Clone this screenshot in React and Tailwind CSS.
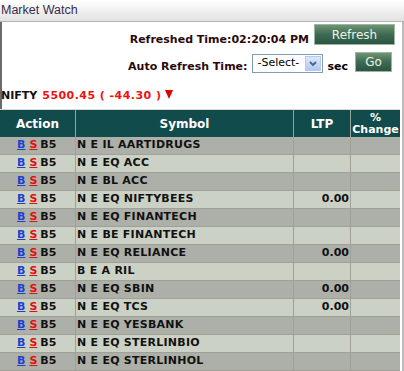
import React from 'react';

const rows = [
  { sym: 'N E IL AARTIDRUGS', ltp: '' },
  { sym: 'N E EQ ACC', ltp: '' },
  { sym: 'N E BL ACC', ltp: '' },
  { sym: 'N E EQ NIFTYBEES', ltp: '0.00' },
  { sym: 'N E EQ FINANTECH', ltp: '' },
  { sym: 'N E BE FINANTECH', ltp: '' },
  { sym: 'N E EQ RELIANCE', ltp: '0.00' },
  { sym: 'B E A RIL', ltp: '' },
  { sym: 'N E EQ SBIN', ltp: '0.00' },
  { sym: 'N E EQ TCS', ltp: '0.00' },
  { sym: 'N E EQ YESBANK', ltp: '' },
  { sym: 'N E EQ STERLINBIO', ltp: '' },
  { sym: 'N E EQ STERLINHOL', ltp: '' },
];

function GreenButton({ children, className }) {
  return (
    <button
      className={`bg-gradient-to-b from-[#6e9472] via-[#3d6a55] to-[#2a5543] border border-[#9fb59f] text-[#eef3e6] text-[12px] leading-none ${className}`}
    >
      {children}
    </button>
  );
}

export default function App() {
  return (
    <div className="w-[404px] h-[371px] bg-white overflow-hidden font-['DejaVu_Sans',Verdana,sans-serif]">
      {/* title bar */}
      <div className="h-[22px] border-b border-[#b5b5b5] bg-gradient-to-b from-white to-[#e2e2e2] flex items-center px-[1px]">
        <span className="text-[12.5px] text-[#3b2b4b] font-['Liberation_Sans',Arial,sans-serif]">Market Watch</span>
      </div>

      <div className="border-l-2 border-l-[#6b6b6b] border-r-2 border-r-[#bdbdbd] bg-white h-[349px] flex flex-col">
        {/* refreshed */}
        <div className="flex items-start justify-end pr-[7px] pt-[2px] h-[24px]">
          <span className="text-[11px] leading-[13px] font-bold text-[#2a0a0a] mr-[5px] mt-[9px]">Refreshed Time:02:20:04 PM</span>
          <GreenButton className="w-[81px] h-[21px]">Refresh</GreenButton>
        </div>
        {/* auto refresh */}
        <div className="flex items-start justify-end pr-[10px] pt-[6px] h-[50px]">
          <span className="text-[11px] leading-[13px] font-bold text-[#2a0a0a] mr-[5px] mt-[8px]">Auto Refresh Time:</span>
          <div className="w-[71px] h-[19px] mt-[2px] border border-[#7f9db9] bg-white flex items-center">
            <span className="flex-1 text-[11px] text-[#000] pl-[4px]">-Select-</span>
            <span className="w-[16px] h-[15px] mr-[1px] bg-gradient-to-b from-[#dde7fb] to-[#b5c8f1] border border-[#b7c9ef] flex items-center justify-center">
              <svg width="8" height="6" viewBox="0 0 8 6">
                <path d="M1 1 L4 4 L7 1" stroke="#4d6185" strokeWidth="1.8" fill="none" />
              </svg>
            </span>
          </div>
          <span className="text-[11px] leading-[13px] font-bold text-black ml-[4px] mr-[7px] mt-[8px]">sec</span>
          <GreenButton className="w-[37px] h-[20px]">Go</GreenButton>
        </div>
        {/* nifty */}
        <div className="flex items-center h-[13px] text-[11px] leading-[13px] font-bold">
          <span className="text-[#111] -ml-[1px]">NIFTY</span>
          <span className="text-[#f01010] ml-[5px] tracking-[0.45px]">5500.45 ( -44.30 )</span>
          <svg width="8" height="9" viewBox="0 0 8 9" className="ml-[4px] -mt-[2px]">
            <path d="M0 0 L8 0 L4 9 Z" fill="#e00000" />
          </svg>
        </div>

        {/* table */}
        <div className="mt-[7px] -ml-[2px] w-[400px] border-t border-t-[#d8d8d8]">
          <div className="grid grid-cols-[76px_218px_57px_49px] h-[27px] bg-[#124b4b] text-white text-[12px] font-bold">
            <div className="border-r border-r-[#9aa39a] flex items-center justify-center">Action</div>
            <div className="border-r border-r-[#9aa39a] flex items-center justify-center">Symbol</div>
            <div className="border-r border-r-[#9aa39a] flex items-center justify-center">LTP</div>
            <div className="flex flex-col items-center justify-center text-[11px] leading-[12px] overflow-hidden">
              <span>%</span>
              <span>Change</span>
            </div>
          </div>
          {rows.map((r, i) => (
            <div
              key={i}
              className={`grid grid-cols-[76px_218px_57px_49px] h-[18px] border-b border-b-[#a09f98] text-[11px] font-bold text-[#111] ${i % 2 === 0 ? 'bg-[#adb0a8]' : 'bg-[#cbd2c5]'}`}
            >
              <div className="border-r border-r-[#a09f98] pl-[17px] flex items-center">
                <span className="text-[#1d3fd0] underline">B</span>
                <span className="text-[#e01010] underline ml-[4px]">S</span>
                <span className="ml-[3px]">B5</span>
              </div>
              <div className="border-r border-r-[#a09f98] pl-[1px] flex items-center tracking-[0.25px]">{r.sym}</div>
              <div className="border-r border-r-[#a09f98] pr-[1px] flex items-center justify-end">{r.ltp}</div>
              <div></div>
            </div>
          ))}
        </div>
        <div className="flex-1 bg-[#efefef]" />
      </div>
    </div>
  );
}
